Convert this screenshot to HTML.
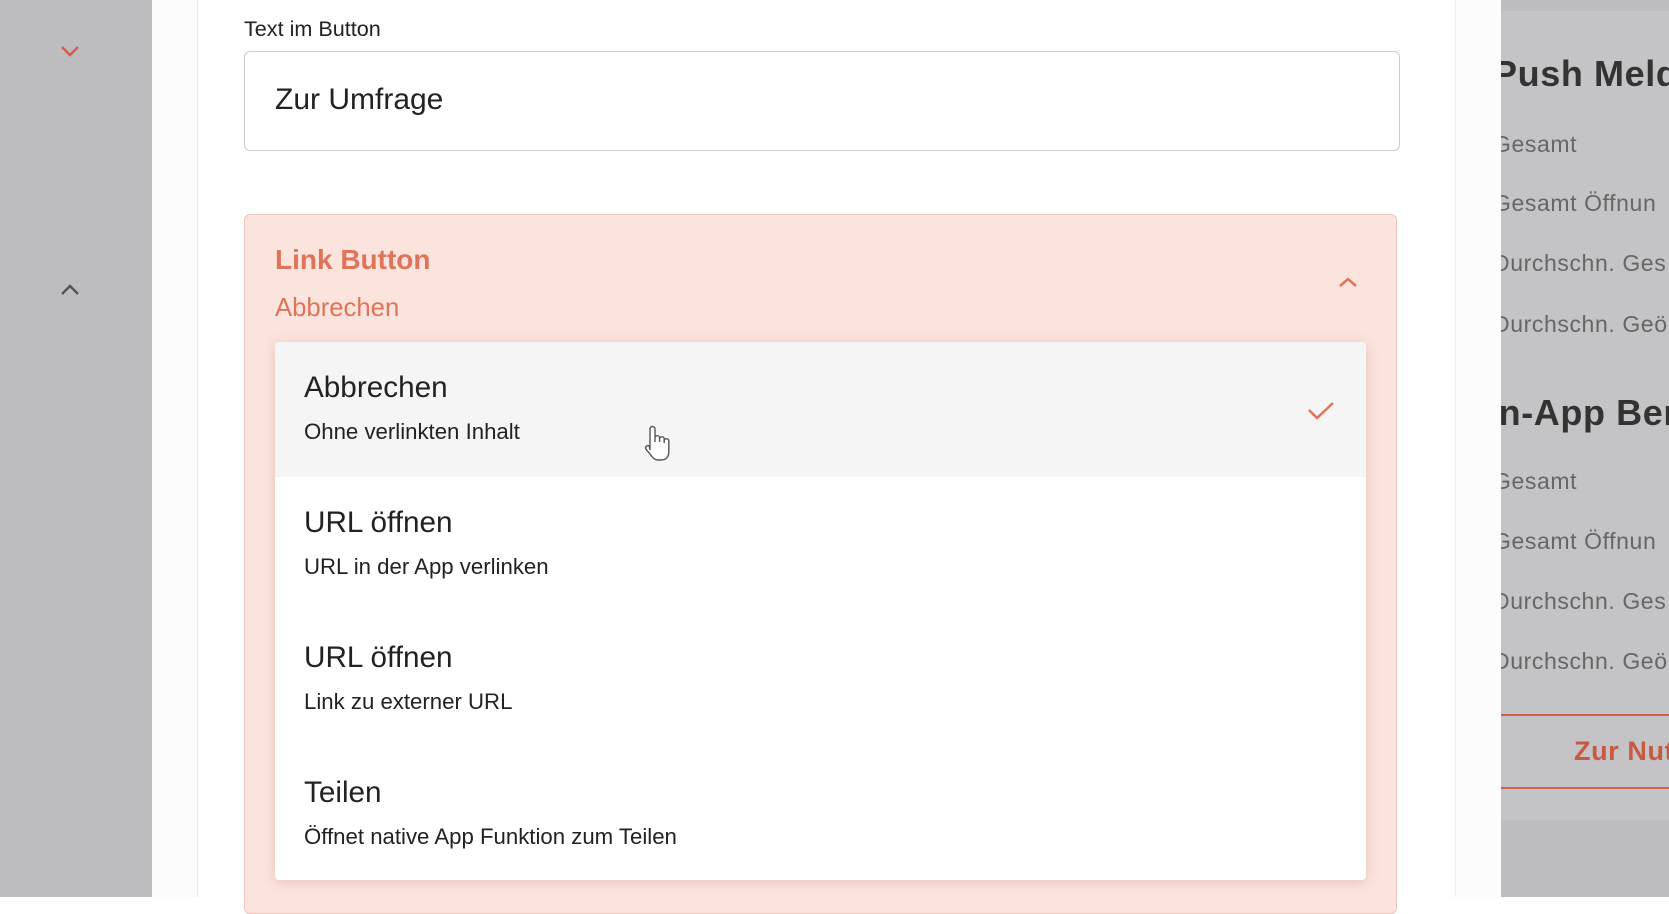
<!DOCTYPE html>
<html><head><meta charset="utf-8"><style>
*{margin:0;padding:0;box-sizing:border-box}
body{width:1669px;height:897px;overflow:hidden;background:#fff;font-family:"Liberation Sans",Roboto,sans-serif;position:relative;color:#222}
.abs{position:absolute}
.t{white-space:nowrap;line-height:1}
.r{letter-spacing:.6px}
</style></head><body>
<div class="abs" style="left:0;top:0;width:152px;height:897px;background:#bdbdc0"></div>
<svg class="abs" style="left:58px;top:43px" width="24" height="16"><path d="M4 4 L12 12 L20 4" fill="none" stroke="#d0604a" stroke-width="2.5"/></svg>
<svg class="abs" style="left:58px;top:282px" width="24" height="16"><path d="M4 12 L12 4 L20 12" fill="none" stroke="#555" stroke-width="2.5"/></svg>

<div class="abs" style="left:152px;top:0;width:1349px;height:897px;background:#fcfcfc"></div>
<div class="abs" style="left:197px;top:0;width:1259px;height:897px;background:#fefefe;border-left:1px solid #eee;border-right:1px solid #eee"></div>

<div class="abs t" style="left:244px;top:18px;font-size:21.6px;color:#222">Text im Button</div>
<div class="abs" style="left:244px;top:51px;width:1156px;height:100px;border:1px solid #ccc;border-radius:6px;background:#fff"></div>
<div class="abs t" style="left:275px;top:85px;font-size:30px;color:#222">Zur Umfrage</div>

<div class="abs" style="left:244px;top:214px;width:1153px;height:700px;background:#fbe4de;border:1px solid #ecc6bb;border-radius:6px"></div>
<div class="abs t" style="left:275px;top:246px;font-size:28px;font-weight:bold;color:#e0745a">Link Button</div>
<div class="abs t" style="left:275px;top:296px;font-size:25.7px;color:#e0745a">Abbrechen</div>
<svg class="abs" style="left:1336px;top:274px" width="24" height="16"><path d="M4 12 L12 5 L20 12" fill="none" stroke="#e0745a" stroke-width="2.5"/></svg>

<div class="abs" style="left:275px;top:342px;width:1091px;height:538px;background:#fff;border-radius:4px;box-shadow:0 2px 12px rgba(180,100,80,.25);overflow:hidden">
 <div style="height:135px;background:#f5f5f5"></div>
</div>
<div class="abs t" style="left:304px;top:373px;font-size:29.7px">Abbrechen</div>
<div class="abs t" style="left:304px;top:421px;font-size:22.2px">Ohne verlinkten Inhalt</div>
<div class="abs t" style="left:304px;top:508px;font-size:29.7px">URL öffnen</div>
<div class="abs t" style="left:304px;top:556px;font-size:22.2px">URL in der App verlinken</div>
<div class="abs t" style="left:304px;top:643px;font-size:29.7px">URL öffnen</div>
<div class="abs t" style="left:304px;top:691px;font-size:22.2px">Link zu externer URL</div>
<div class="abs t" style="left:304px;top:778px;font-size:29.7px">Teilen</div>
<div class="abs t" style="left:304px;top:826px;font-size:22.2px">Öffnet native App Funktion zum Teilen</div>
<svg class="abs" style="left:1306px;top:398px" width="30" height="24"><path d="M3 12 L11 20 L27 5" fill="none" stroke="#e0745a" stroke-width="2.5"/></svg>
<svg class="abs" style="left:640px;top:424px" width="32" height="40"><path d="M10 26 V5 a2.5 2.5 0 0 1 5 0 V18 V14 a2.3 2.3 0 0 1 4.6 0 V18 V15 a2.3 2.3 0 0 1 4.6 0 V19 V17 a2.3 2.3 0 0 1 4.6 0 V28 c0 5 -3 8 -8 8 h-3 c-3 0 -5 -2 -7 -5 l-5 -6 a2.4 2.4 0 0 1 3.5 -3 z" fill="#fff" stroke="#555" stroke-width="1.4"/></svg>

<div class="abs" style="left:1501px;top:0;width:168px;height:897px;background:#bdbdc0"></div>
<div class="abs" style="left:1501px;top:11px;width:168px;height:809px;background:#c4c4c7"></div>
<div class="abs" style="left:1501px;top:0;width:168px;height:897px;overflow:hidden">
 <div class="abs t r" style="left:-8px;top:56px;font-size:36px;font-weight:bold;color:#333">Push Meld</div>
 <div class="abs t r" style="left:-8px;top:133px;font-size:23px;color:#666">Gesamt</div>
 <div class="abs t r" style="left:-8px;top:192px;font-size:23px;color:#666">Gesamt Öffnun</div>
 <div class="abs t r" style="left:-8px;top:252px;font-size:23px;color:#666">Durchschn. Ges</div>
 <div class="abs t r" style="left:-8px;top:313px;font-size:23px;color:#666">Durchschn. Geö</div>
 <div class="abs t r" style="left:-13px;top:395px;font-size:36px;font-weight:bold;color:#333">In-App Ber</div>
 <div class="abs t r" style="left:-8px;top:470px;font-size:23px;color:#666">Gesamt</div>
 <div class="abs t r" style="left:-8px;top:530px;font-size:23px;color:#666">Gesamt Öffnun</div>
 <div class="abs t r" style="left:-8px;top:590px;font-size:23px;color:#666">Durchschn. Ges</div>
 <div class="abs t r" style="left:-8px;top:650px;font-size:23px;color:#666">Durchschn. Geö</div>
 <div class="abs" style="left:0;top:714px;width:200px;height:75px;border-top:2px solid #d0604a;border-bottom:2px solid #d0604a"></div>
 <div class="abs t r" style="left:73px;top:738px;font-size:27px;font-weight:bold;color:#c85a42">Zur Nutzung</div>
</div>
</body></html>
